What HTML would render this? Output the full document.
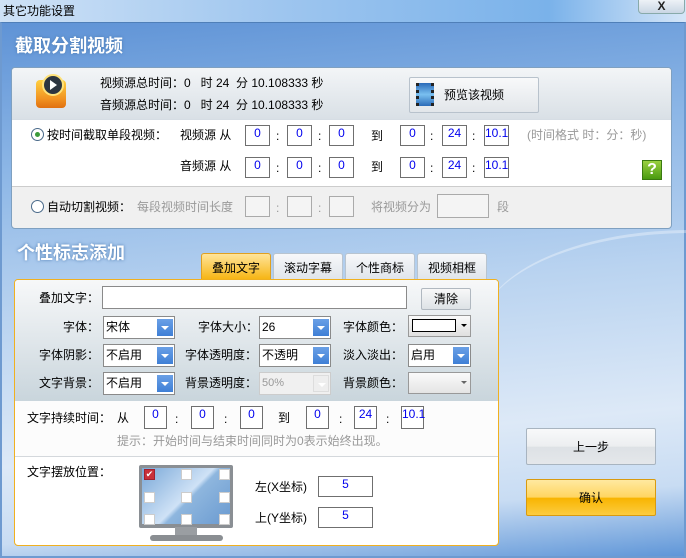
<!DOCTYPE html>
<html><head><meta charset="utf-8"><style>
*{margin:0;padding:0;box-sizing:border-box}
body{width:686px;height:558px;overflow:hidden;position:relative;font-family:"Liberation Sans","Noto Sans CJK SC","WenQuanYi Zen Hei",sans-serif;font-size:12px;color:#000;background:#7fb0e6}
.a{position:absolute;white-space:nowrap}
.t{position:absolute;white-space:nowrap;line-height:14px}
.box{position:absolute;background:#fff;border:1px solid #6f6f6f;color:#0000ee;font-size:12px;text-align:center;line-height:14px;height:21px}
.gbox{position:absolute;background:#f4f4f4;border:1px solid #aaa;height:21px}
.sel{position:absolute;background:#fff;border:1px solid #8a8a8a;height:23px;line-height:20px;padding-left:2px}
.sel i{position:absolute;right:1px;top:2px;width:16px;height:17px;background:linear-gradient(#6aa0e6,#3f7fd6);}
.sel i:after{content:"";position:absolute;left:4px;top:7px;border-left:4px solid transparent;border-right:4px solid transparent;border-top:4px solid #fff}
.tab{position:absolute;top:253px;height:27px;width:70px;border:1px solid #b8c4d0;border-bottom:none;border-radius:3px 3px 0 0;background:linear-gradient(#f7f8fa,#dfe4ea);text-align:center;line-height:28px}
.cb{position:absolute;width:11px;height:11px;background:#fff;border:1px solid #ccc}
.w{color:#fff;font-size:18px;font-weight:bold;text-shadow:0 0 3px #4a79b0}
.g{color:#999}
</style></head><body>
<div class="a" style="left:0;top:0;width:686px;height:22px;background:linear-gradient(90deg,#cfe2f6,#9fc6ef 40%,#7ab2ea 80%,#d5e6f8)"></div>
<div class="t" style="left:3px;top:4px;font-size:12px">其它功能设置</div>
<div class="a" style="left:638px;top:-2px;width:47px;height:16px;border:1px solid #8aa;border-radius:0 0 4px 4px;background:linear-gradient(#f0f4f8,#c9d6e4);text-align:center;font-weight:bold;line-height:14px;color:#222">X</div>
<div class="a" style="left:0;top:22px;width:686px;height:536px;border:2px solid #6e9ad0;border-top:1px solid #4f7fb8;background:linear-gradient(175deg,#5f93d6 0%,#8cb6e6 25%,#b9d3f0 50%,#dde9f7 75%,#c8dcf3 88%,#5f96d8 100%)"></div>
<div class="a" style="left:480px;top:230px;width:420px;height:200px;border-radius:50%;border-top:3px solid rgba(255,255,255,.35)"></div>
<div class="t w" style="left:15px;top:36px;line-height:20px">截取分割视频</div>

<div class="a" style="left:11px;top:67px;width:661px;height:162px;border:1px solid #7fa0c0;border-radius:4px;background:#f0f0f0;overflow:hidden">
 <div class="a" style="left:0;top:0;width:661px;height:51px;background:linear-gradient(#f3f5f7,#d9e0e6)"></div>
 <div class="a" style="left:0;top:51px;width:661px;height:68px;background:#fff;border-top:1px solid #d6dde4;border-bottom:1px solid #ccc"></div>
</div>
<div class="a" style="left:36px;top:80px;width:30px;height:28px;border-radius:4px;background:linear-gradient(#ffd040,#f09020 70%,#e07010)"></div>
<div class="a" style="left:42px;top:74px;width:22px;height:22px;border-radius:50%;background:#2c3540;border:2px solid #ffe27a"></div>
<div class="a" style="left:50px;top:80px;border-top:5px solid transparent;border-bottom:5px solid transparent;border-left:7px solid #fff"></div>
<div class="t" style="left:100px;top:76px">视频源总时间：0 &nbsp; 时 24 &nbsp;分 10.108333 秒</div>
<div class="t" style="left:100px;top:98px">音频源总时间：0 &nbsp; 时 24 &nbsp;分 10.108333 秒</div>
<div class="a" style="left:409px;top:77px;width:130px;height:36px;border:1px solid #b8c2cc;border-radius:2px;background:linear-gradient(#f8f9fa,#e2e6ea)"></div>
<div class="a" style="left:416px;top:83px;width:18px;height:23px;background:linear-gradient(#2a6ab8,#7ac0f0,#2a6ab8);border-left:3px dotted #222;border-right:3px dotted #222"></div>
<div class="t" style="left:444px;top:88px">预览该视频</div>

<div class="a" style="left:31px;top:128px;width:13px;height:13px;border-radius:50%;border:1px solid #4a6a8a;background:#fff"></div>
<div class="a" style="left:35px;top:132px;width:5px;height:5px;border-radius:50%;background:#3a9a3a"></div>
<div class="t" style="left:47px;top:128px">按时间截取单段视频：</div>
<div class="t" style="left:180px;top:128px">视频源 从</div>
<div class="t" style="left:180px;top:159px">音频源 从</div>
<div class="box" style="left:245px;top:125px;width:25px">0</div><div class="t" style="left:276px;top:129px">:</div>
<div class="box" style="left:287px;top:125px;width:25px">0</div><div class="t" style="left:318px;top:129px">:</div>
<div class="box" style="left:329px;top:125px;width:25px">0</div>
<div class="t" style="left:371px;top:129px">到</div>
<div class="box" style="left:400px;top:125px;width:25px">0</div><div class="t" style="left:430px;top:129px">:</div>
<div class="box" style="left:442px;top:125px;width:25px">24</div><div class="t" style="left:472px;top:129px">:</div>
<div class="box" style="left:484px;top:125px;width:25px">10.1</div>
<div class="t g" style="left:527px;top:128px">(时间格式 时：分：秒)</div>
<div class="box" style="left:245px;top:157px;width:25px">0</div><div class="t" style="left:276px;top:161px">:</div>
<div class="box" style="left:287px;top:157px;width:25px">0</div><div class="t" style="left:318px;top:161px">:</div>
<div class="box" style="left:329px;top:157px;width:25px">0</div>
<div class="t" style="left:371px;top:160px">到</div>
<div class="box" style="left:400px;top:157px;width:25px">0</div><div class="t" style="left:430px;top:161px">:</div>
<div class="box" style="left:442px;top:157px;width:25px">24</div><div class="t" style="left:472px;top:161px">:</div>
<div class="box" style="left:484px;top:157px;width:25px">10.1</div>
<div class="a" style="left:642px;top:160px;width:20px;height:20px;background:linear-gradient(#9ad040,#4a9a10);border:1px solid #3a7a10;color:#fff;font-weight:bold;font-size:16px;text-align:center;line-height:18px">?</div>

<div class="a" style="left:31px;top:200px;width:13px;height:13px;border-radius:50%;border:1px solid #4a6a8a;background:#fff"></div>
<div class="t" style="left:47px;top:200px">自动切割视频：</div>
<div class="t g" style="left:137px;top:200px">每段视频时间长度</div>
<div class="gbox" style="left:245px;top:196px;width:25px"></div><div class="t g" style="left:276px;top:201px">:</div>
<div class="gbox" style="left:287px;top:196px;width:25px"></div><div class="t g" style="left:318px;top:201px">:</div>
<div class="gbox" style="left:329px;top:196px;width:25px"></div>
<div class="t g" style="left:371px;top:200px">将视频分为</div>
<div class="gbox" style="left:437px;top:194px;width:52px;height:24px"></div>
<div class="t g" style="left:497px;top:200px">段</div>

<div class="t w" style="left:17px;top:243px;line-height:20px">个性标志添加</div>
<div class="tab" style="left:201px;background:linear-gradient(#ffe49a,#f6b410);border-color:#e0a020">叠加文字</div>
<div class="tab" style="left:273px">滚动字幕</div>
<div class="tab" style="left:345px">个性商标</div>
<div class="tab" style="left:417px">视频相框</div>

<div class="a" style="left:14px;top:279px;width:485px;height:267px;border:1px solid #f0b020;border-radius:4px;background:#fff;overflow:hidden">
 <div class="a" style="left:0;top:0;width:485px;height:121px;background:linear-gradient(#f7f8f9,#c9d5dc)"></div>
 <div class="a" style="left:0;top:121px;width:485px;height:56px;background:#fcfcfc;border-bottom:1px solid #d4d8dc"></div>
</div>
<div class="t" style="left:39px;top:291px">叠加文字：</div>
<div class="a" style="left:102px;top:286px;width:305px;height:23px;border:1px solid #8a8a8a;background:#fff"></div>
<div class="a" style="left:421px;top:288px;width:50px;height:22px;border:1px solid #b0b8c0;border-radius:2px;background:linear-gradient(#f8f8f8,#dde2e6);text-align:center;line-height:20px">清除</div>

<div class="t" style="left:63px;top:320px">字体：</div>
<div class="sel" style="left:103px;top:316px;width:72px">宋体<i></i></div>
<div class="t" style="left:198px;top:320px">字体大小：</div>
<div class="sel" style="left:259px;top:316px;width:72px">26<i></i></div>
<div class="t" style="left:343px;top:320px">字体颜色：</div>
<div class="a" style="left:408px;top:315px;width:63px;height:22px;border:1px solid #999;background:linear-gradient(#fafafa,#e0e0e0)"></div>
<div class="a" style="left:412px;top:319px;width:44px;height:13px;border:1px solid #000;background:#fff"></div>
<div class="a" style="left:461px;top:324px;border-left:3px solid transparent;border-right:3px solid transparent;border-top:3px solid #000"></div>

<div class="t" style="left:39px;top:348px">字体阴影：</div>
<div class="sel" style="left:103px;top:344px;width:72px">不启用<i></i></div>
<div class="t" style="left:185px;top:348px">字体透明度：</div>
<div class="sel" style="left:259px;top:344px;width:72px">不透明<i></i></div>
<div class="t" style="left:343px;top:348px">淡入淡出：</div>
<div class="sel" style="left:408px;top:344px;width:63px">启用<i></i></div>

<div class="t" style="left:39px;top:376px">文字背景：</div>
<div class="sel" style="left:103px;top:372px;width:72px">不启用<i></i></div>
<div class="t" style="left:185px;top:376px">背景透明度：</div>
<div class="sel" style="left:259px;top:372px;width:72px;background:#f0f0f0;border-color:#ccc;color:#999;font-size:11px">50%<i style="background:#eee;border:1px solid #ddd"></i></div>
<div class="t" style="left:343px;top:376px">背景颜色：</div>
<div class="a" style="left:408px;top:372px;width:63px;height:22px;border:1px solid #999;background:linear-gradient(#fafafa,#e4e4e4)"></div>
<div class="a" style="left:461px;top:381px;border-left:3px solid transparent;border-right:3px solid transparent;border-top:3px solid #666"></div>

<div class="t" style="left:27px;top:411px">文字持续时间：</div>
<div class="t" style="left:117px;top:411px">从</div>
<div class="box" style="left:144px;top:406px;width:23px;height:23px">0</div><div class="t" style="left:175px;top:412px">:</div>
<div class="box" style="left:191px;top:406px;width:23px;height:23px">0</div><div class="t" style="left:224px;top:412px">:</div>
<div class="box" style="left:240px;top:406px;width:23px;height:23px">0</div>
<div class="t" style="left:278px;top:411px">到</div>
<div class="box" style="left:306px;top:406px;width:23px;height:23px">0</div><div class="t" style="left:339px;top:412px">:</div>
<div class="box" style="left:354px;top:406px;width:23px;height:23px">24</div><div class="t" style="left:386px;top:412px">:</div>
<div class="box" style="left:401px;top:406px;width:23px;height:23px">10.1</div>
<div class="t g" style="left:117px;top:434px">提示：开始时间与结束时间同时为0表示始终出现。</div>

<div class="t" style="left:27px;top:465px">文字摆放位置：</div>
<div class="a" style="left:139px;top:465px;width:94px;height:63px;background:#8a8f94;border-radius:2px"></div>
<div class="a" style="left:142px;top:468px;width:88px;height:56px;background:linear-gradient(135deg,#7aa8d8,#cfe2f6 50%,#8eb6de 55%,#6a9ad0)"></div>
<div class="a" style="left:175px;top:527px;width:22px;height:9px;background:#9a9ea2"></div>
<div class="a" style="left:150px;top:535px;width:73px;height:6px;border-radius:3px;background:#8a8e92"></div>
<div class="cb" style="left:144px;top:469px;background:#c8303a;border-color:#a02030;color:#fff;font-size:9px;line-height:9px;text-align:center">✔</div>
<div class="cb" style="left:181px;top:469px"></div><div class="cb" style="left:219px;top:469px"></div>
<div class="cb" style="left:144px;top:492px"></div><div class="cb" style="left:181px;top:492px"></div><div class="cb" style="left:219px;top:492px"></div>
<div class="cb" style="left:144px;top:514px"></div><div class="cb" style="left:181px;top:514px"></div><div class="cb" style="left:219px;top:514px"></div>
<div class="t" style="left:255px;top:480px">左(X坐标)</div>
<div class="box" style="left:318px;top:476px;width:55px">5</div>
<div class="t" style="left:255px;top:511px">上(Y坐标)</div>
<div class="box" style="left:318px;top:507px;width:55px">5</div>

<div class="a" style="left:526px;top:428px;width:130px;height:37px;border:1px solid #a8b4c0;border-radius:2px;background:linear-gradient(#f8f9fa 0%,#eceef0 50%,#dde1e5 51%,#e4e7ea);text-align:center;line-height:36px">上一步</div>
<div class="a" style="left:526px;top:479px;width:130px;height:37px;border:1px solid #d89a10;border-radius:2px;background:linear-gradient(#ffe9a0 0%,#ffd560 50%,#f8b400 51%,#fccc40);text-align:center;line-height:36px">确认</div>
</body></html>
